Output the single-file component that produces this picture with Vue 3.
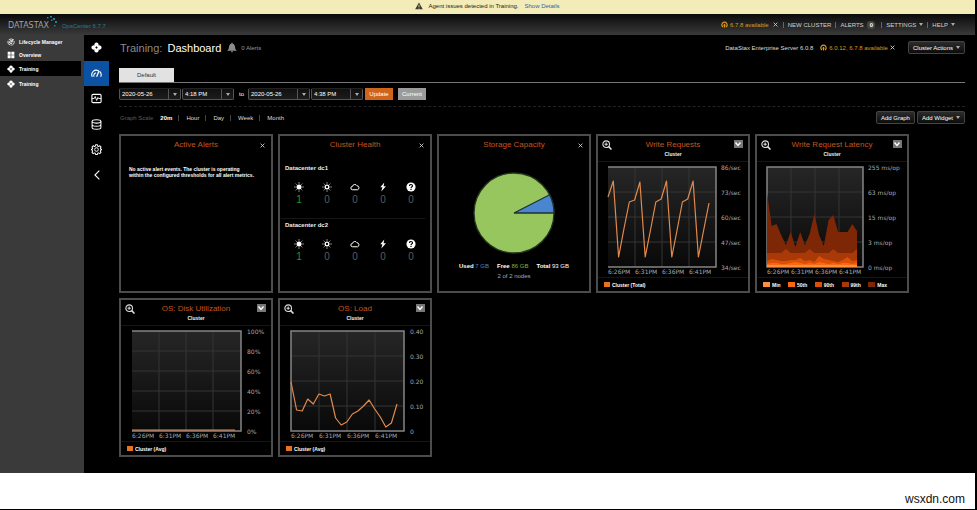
<script setup>
const sideTop = [
  { label: 'Lifecycle Manager', icon: 'lifecycle' },
  { label: 'Overview', icon: 'grid' },
]
const sideClusters = [
  { id: 1, label: 'Training', active: true },
  { id: 2, label: 'Training', active: false },
]
const railItems = [
  { name: 'Cluster', icon: 'nodes' },
  { name: 'Dashboard', icon: 'gauge', active: true },
  { name: 'Activities', icon: 'pulse' },
  { name: 'Data', icon: 'database' },
  { name: 'Services', icon: 'gear' },
  { name: 'Collapse', icon: 'back' },
]
const range = [
  { id: 'from-date', name: 'From date', value: '2020-05-26', kind: 'date' },
  { id: 'from-time', name: 'From time', value: '4:18 PM', kind: 'time' },
  { id: 'to-date', name: 'To date', value: '2020-05-26', kind: 'date', lead: 'to' },
  { id: 'to-time', name: 'To time', value: '4:38 PM', kind: 'time' },
]
const scales = ['20m', 'Hour', 'Day', 'Week', 'Month']
const datacenters = ['Datacenter dc1', 'Datacenter dc2']
const health = [
  { icon: 'sun', count: 1 },
  { icon: 'sunOpen', count: 0 },
  { icon: 'cloud', count: 0 },
  { icon: 'bolt', count: 0 },
  { icon: 'help', count: 0 },
]

const TOP = 5
const PLOT_H = 100
const times = ['6:26PM', '6:31PM', '6:36PM', '6:41PM']
const charts = [
  {
    title: 'Write Requests', left: 10, width: 108, step: 27, labelX: 123, span: 101, open: true,
    ticks: ['86/sec', '73/sec', '60/sec', '47/sec', '34/sec'],
    legend: [{ label: 'Cluster (Total)', color: '#e8731f' }],
    series: [{ color: '#e08a4c', values: [70, 86, 10, 38, 65, 67, 85, 10, 37, 65, 68, 86, 10, 37, 65, 68, 86, 10, 37, 64] }],
  },
  {
    title: 'Write Request Latency', left: 10, width: 96, step: 24, labelX: 111, span: 90, area: true,
    ticks: ['255 ms/op', '63 ms/op', '15 ms/op', '3 ms/op', '0 ms/op'],
    legend: [
      { label: 'Min', color: '#ff8f3c' },
      { label: '50th', color: '#f96a10' },
      { label: '90th', color: '#dc4f08' },
      { label: '99th', color: '#a93a08' },
      { label: 'Max', color: '#7d2706' },
    ],
    series: [
      { color: '#7d2706', values: [75, 41, 43, 32, 22, 35, 20, 35, 22, 33, 53, 32, 21, 47, 52, 35, 35, 35, 43, 36] },
      { color: '#a93a08', values: [14, 14, 14, 14, 18, 14, 14, 14, 14, 18, 14, 14, 14, 14, 18, 14, 14, 14, 14, 18] },
      { color: '#dc4f08', values: [6, 8, 7, 6, 6, 7, 7, 9, 6, 7, 5, 11, 8, 7, 6, 5, 7, 10, 6, 7] },
      { color: '#f96a10', values: [3, 4, 4, 3, 3, 4, 5, 4, 3, 4, 3, 5, 4, 3, 4, 3, 4, 4, 3, 4] },
      { color: '#ff8f3c', values: [2, 2, 2, 2, 2, 2, 2, 2, 2, 2, 2, 2, 2, 2, 2, 2, 2, 2, 2, 2] },
    ],
  },
  {
    title: 'OS: Disk Utilization', left: 11, width: 109, step: 27, labelX: 126, span: 103, open: true,
    ticks: ['100%', '80%', '60%', '40%', '20%', '0%'],
    legend: [{ label: 'Cluster (Avg)', color: '#e8731f' }],
    series: [{ color: '#e0905c', values: [1, 1, 1, 1, 1, 1, 1, 1, 1, 1, 1, 1, 1, 1, 1, 1, 1, 1, 1, 1] }],
  },
  {
    title: 'OS: Load', left: 11, width: 113, step: 28, labelX: 130, span: 106,
    ticks: ['0.40', '0.30', '0.20', '0.10', '0'],
    legend: [{ label: 'Cluster (Avg)', color: '#e8731f' }],
    series: [{ color: '#e08a4c', values: [49, 21, 20, 32, 27, 37, 35, 37, 13, 6, 9, 17, 20, 25, 31, 22, 14, 4, 8, 27] }],
  },
]

function tickY(chart, i) {
  return TOP + (PLOT_H * i) / (chart.ticks.length - 1)
}
function frame(chart) {
  return `M${chart.left} ${TOP}h${chart.width}v${PLOT_H}h${-chart.width}${chart.open ? '' : 'z'}`
}
function points(chart, values) {
  const pts = values.map((v, i) => {
    const x = chart.left + (chart.span * i) / (values.length - 1)
    return `${x.toFixed(1)},${TOP + PLOT_H - v}`
  })
  if (chart.area) {
    pts.unshift(`${chart.left},${TOP + PLOT_H}`)
    pts.push(`${chart.left + chart.span},${TOP + PLOT_H}`)
  }
  return pts.join(' ')
}

const angle = (7 / 93) * Math.PI * 2
const sliceX = (41 + 40 * Math.cos(angle)).toFixed(2)
const sliceY = (41 - 40 * Math.sin(angle)).toFixed(2)
const slicePath = `M41 41L81 41A40 40 0 0 0 ${sliceX} ${sliceY}Z`
</script>

<template>
  <svg class="defs" aria-hidden="true">
    <symbol id="nodes" viewBox="0 0 12 12">
      <path fill="currentColor" fill-rule="evenodd" d="M6 .6a2.4 2.4 0 0 1 2.2 3.2A2.4 2.4 0 1 1 8.2 8.2 2.4 2.4 0 1 1 3.8 8.2 2.4 2.4 0 1 1 3.8 3.8 2.4 2.4 0 0 1 6 .6ZM6 4.6 4.6 6 6 7.4 7.4 6Z" />
    </symbol>
    <symbol id="grid" viewBox="0 0 12 12">
      <path fill="currentColor" d="M1 1h4.500v4.500H1zM6.500 1H11v4.500H6.500zM1 6.500h4.500V11H1zM6.500 6.500H11V11H6.500z" />
    </symbol>
    <symbol id="lifecycle" viewBox="0 0 12 12">
      <g fill="none" stroke="currentColor" stroke-width="1.200" stroke-linecap="round">
        <path d="M3 2.500A4.800 4.800 0 0 1 9.500 2.600M10.700 5A4.800 4.800 0 0 1 6.800 10.700M4.600 10.600A4.800 4.800 0 0 1 1.200 5" />
        <path d="M8.300 5.200A2.500 2.500 0 1 0 7.800 7.800M9.500 2.600 6 6" />
      </g>
      <circle cx="6" cy="6" r="1" fill="currentColor" />
    </symbol>
    <symbol id="gauge" viewBox="0 0 12 12">
      <g fill="none" stroke="currentColor" stroke-width="1.200" stroke-linecap="round">
        <path d="M1.200 9.200A4.900 4.900 0 0 1 8 3M9.700 4.100A4.900 4.900 0 0 1 10.800 9.200M3.200 9A2.800 2.800 0 0 1 5 5.400" />
        <path d="M8.600 3.600 6.400 9" stroke-width="1.400" />
      </g>
    </symbol>
    <symbol id="pulse" viewBox="0 0 12 12">
      <g fill="none" stroke="currentColor">
        <rect x="1" y="1.500" width="10" height="9" rx="1.200" stroke-width="1.200" />
        <path d="M1 6h2.500L4.600 3.800 6.200 8.200 7.500 4.800 8.200 6H11" />
      </g>
    </symbol>
    <symbol id="database" viewBox="0 0 12 12">
      <g fill="none" stroke="currentColor" stroke-width="1.100">
        <ellipse cx="6" cy="2.700" rx="4.800" ry="1.800" />
        <path d="M1.200 2.700v6.500c0 1 2.100 1.900 4.800 1.900s4.800-.9 4.800-1.900V2.700M1.200 5.900c0 1 2.100 1.900 4.800 1.900s4.800-.9 4.800-1.900" />
      </g>
    </symbol>
    <symbol id="gear" viewBox="0 0 12 12">
      <g fill="none" stroke="currentColor" stroke-linejoin="round">
        <path stroke-width="1.100" d="M5 .8h2l.3 1.500 1 .4 1.300-.8L11 3.300l-.8 1.200.4 1L11.800 6l-1.200 1-.4 1 .7 1.200-1.400 1.300-1.200-.8-1 .4L7 11.400H5l-.4-1.300-1-.4-1.200.8L1.100 9.200 1.800 8l-.4-1L.3 6l1.100-.5.4-1L1.100 3.300l1.300-1.400 1.300.8 1-.4Z" />
        <circle cx="6" cy="6" r="2" />
      </g>
    </symbol>
    <symbol id="back" viewBox="0 0 12 12">
      <path fill="none" stroke="currentColor" stroke-width="1.300" d="M8.800.8 3.500 6l5.300 5.200" />
    </symbol>
    <symbol id="sun" viewBox="0 0 12 12">
      <circle cx="6" cy="6" r="3" fill="currentColor" />
      <path stroke="currentColor" stroke-width="1.100" d="M6 .5v1.300M6 10.200v1.300M.5 6h1.300M10.200 6h1.300M2.100 2.100l.9.9M9 9l.9.9M2.100 9.900 3 9M9 3l.9-.9" />
    </symbol>
    <symbol id="sunOpen" viewBox="0 0 12 12">
      <circle cx="6" cy="6" r="2.200" fill="none" stroke="currentColor" stroke-width="1.600" />
      <path stroke="currentColor" stroke-width="1.100" d="M6 .5v1.300M6 10.200v1.300M.5 6h1.300M10.200 6h1.300M2.100 2.100l.9.9M9 9l.9.9M2.100 9.900 3 9M9 3l.9-.9" />
    </symbol>
    <symbol id="cloud" viewBox="0 0 12 12">
      <path fill="none" stroke="currentColor" stroke-width="1.200" d="M3 9.300a2 2 0 0 1 0-4 2.900 2.900 0 0 1 5.400-.8A2.500 2.500 0 0 1 9.200 9.300Z" />
    </symbol>
    <symbol id="bolt" viewBox="0 0 12 12">
      <path fill="currentColor" d="M7.500.5 2.800 6.300h2.500L4 11.500l5.500-6.300H6.700Z" />
    </symbol>
    <symbol id="help" viewBox="0 0 12 12">
      <circle cx="6" cy="6" r="5.500" fill="currentColor" />
      <path fill="none" stroke="#000" stroke-width="1.400" d="M4.200 4.700c0-2.400 3.700-2.200 3.600 0C7.700 5.900 6 5.900 6 7.400M6 8.300v1.400" />
    </symbol>
    <symbol id="upgrade" viewBox="0 0 12 12">
      <path fill="none" stroke="currentColor" stroke-width="2" d="M3.200 10.300A4.600 4.600 0 1 1 8.800 10.300" />
      <path fill="currentColor" d="M6 4.500 8.600 7.500H7V11H5V7.500H3.400Z" />
    </symbol>
    <symbol id="cross" viewBox="0 0 12 12">
      <path stroke="currentColor" stroke-width="2" d="m1.500 1.500 9 9M10.500 1.500l-9 9" />
    </symbol>
    <symbol id="magnify" viewBox="0 0 12 12">
      <g fill="none" stroke="currentColor" stroke-width="1.300">
        <circle cx="5" cy="5" r="4" />
        <path d="M5 3v4M3 5h4" />
        <path d="m8 8 3.400 3.400" stroke-width="1.900" />
      </g>
    </symbol>
  </svg>

  <div class="page">
    <div class="notice" role="status">
      <svg class="warn" viewBox="0 0 12 12" aria-hidden="true">
        <path fill="#3d3a2c" d="M6 .8 11.700 11H.3Z" />
        <path stroke="#f4ecb8" stroke-width="1.200" d="M6 4.200v3.500M6 8.600v1.200" />
      </svg>
      <span>Agent issues detected in Training.</span>
      <a href="#details">Show Details</a>
    </div>

    <header class="topbar">
      <div class="brand">
        <span class="logo">DATASTAX</span>
        <svg class="sparks" viewBox="0 0 12 12" aria-hidden="true">
          <g fill="#1f8296">
            <rect x="1" y="1" width="1.500" height="1.500" /><rect x="4" y="0" width="2" height="1.500" />
            <rect x="7" y="2" width="2" height="2" /><rect x="5" y="3.500" width="1.500" height="1.500" />
            <rect x="9" y="5" width="2" height="2" /><rect x="8" y="9" width="1.500" height="1.500" />
          </g>
        </svg>
        <span class="product">OpsCenter 6.7.7</span>
      </div>
      <nav class="topnav" aria-label="Main">
        <a class="amber" href="#upgrade"><svg class="ic7"><use href="#upgrade" /></svg>6.7.8 available</a>
        <button class="plain dismiss" aria-label="Dismiss version"><svg class="ic5"><use href="#cross" /></svg></button>
        <i class="bar"></i>
        <a href="#new">NEW CLUSTER</a>
        <i class="bar"></i>
        <a href="#alerts">ALERTS <b class="badge">0</b></a>
        <i class="bar"></i>
        <button class="plain">SETTINGS<i class="caret"></i></button>
        <i class="bar"></i>
        <button class="plain">HELP<i class="caret"></i></button>
      </nav>
    </header>

    <div class="body">
      <aside class="sidebar">
        <a v-for="s in sideTop" :key="s.label" href="#side" class="side-link">
          <svg class="ic8"><use :href="'#' + s.icon" /></svg>{{ s.label }}
        </a>
        <a v-for="s in sideClusters" :key="s.id" href="#cluster" class="side-link cluster" :class="{ active: s.active }">
          <svg class="ic8"><use href="#nodes" /></svg>{{ s.label }}
        </a>
      </aside>

      <nav class="rail" aria-label="Cluster sections">
        <div class="rail-items">
          <button v-for="r in railItems" :key="r.icon" :aria-label="r.name" :class="{ active: r.active }">
            <svg :class="r.icon === 'back' ? 'ic10' : 'ic11'"><use :href="'#' + r.icon" /></svg>
          </button>
        </div>
      </nav>

      <main class="content">
        <div class="titlebar">
          <h1><span>Training:</span> Dashboard</h1>
          <svg class="bell" viewBox="0 0 12 12" aria-hidden="true">
            <path fill="#8b8b8b" d="M6 .3c.7 0 1 .5 1 1.100C9 2 9.600 3.800 9.700 6c.1 1.700.7 2.400 1.800 3.200v.6H.5v-.6C1.600 8.400 2.200 7.700 2.300 6 2.400 3.800 3 2 5 1.400 5 .8 5.300.3 6 .3ZM4.600 10.400h2.800c0 1.800-2.800 1.800-2.800 0Z" />
          </svg>
          <span class="muted">0 Alerts</span>
          <div class="title-right">
            <span>DataStax Enterprise Server 6.0.8</span>
            <a class="amber" href="#versions"><svg class="ic7"><use href="#upgrade" /></svg>6.0.12, 6.7.8 available</a>
            <button class="plain" aria-label="Dismiss update"><svg class="ic5"><use href="#cross" /></svg></button>
            <button class="btn actions">Cluster Actions<i class="caret"></i></button>
          </div>
        </div>

        <div class="tabs"><button class="tab">Default</button></div>

        <form class="range" @submit.prevent>
          <template v-for="r in range" :key="r.id">
            <span v-if="r.lead" class="lead">{{ r.lead }}</span>
            <label class="combo" :class="r.kind">
              <select :id="r.id" :aria-label="r.name"><option>{{ r.value }}</option></select>
              <span class="drop"><i class="caret"></i></span>
            </label>
          </template>
          <button class="solid update">Update</button>
          <button class="solid current" type="button">Current</button>
        </form>

        <div class="scale">
          <span class="scale-label">Graph Scale</span>
          <div class="scale-list">
            <button v-for="(s, i) in scales" :key="s" class="plain" :class="{ on: i === 0 }">{{ s }}</button>
          </div>
          <div class="scale-actions">
            <button class="btn">Add Graph</button>
            <button class="btn">Add Widget<i class="caret"></i></button>
          </div>
        </div>

        <div class="widgets">
          <section class="widget">
            <div class="head">
              <h2>Active Alerts</h2>
              <button class="plain close" aria-label="Close"><svg class="ic5"><use href="#cross" /></svg></button>
            </div>
            <p class="message">No active alert events. The cluster is operating<br />within the configured thresholds for all alert metrics.</p>
          </section>

          <section class="widget">
            <div class="head">
              <h2>Cluster Health</h2>
              <button class="plain close" aria-label="Close"><svg class="ic5"><use href="#cross" /></svg></button>
            </div>
            <div v-for="dc in datacenters" :key="dc" class="dc">
              <h3>{{ dc }}</h3>
              <div class="states">
                <div v-for="h in health" :key="h.icon" class="state" :class="{ ok: h.count > 0 }">
                  <svg class="ic10"><use :href="'#' + h.icon" /></svg>
                  <span>{{ h.count }}</span>
                </div>
              </div>
            </div>
          </section>

          <section class="widget storage">
            <div class="head">
              <h2>Storage Capacity</h2>
              <button class="plain close" aria-label="Close"><svg class="ic5"><use href="#cross" /></svg></button>
            </div>
            <svg class="pie" viewBox="0 0 82 82" role="img" aria-label="Storage use">
              <circle cx="41" cy="41" r="40" fill="#97c65f" stroke="#26361f" stroke-width="1.300" />
              <path :d="slicePath" fill="#4a86cf" stroke="#1f2f33" stroke-width="1.300" />
            </svg>
            <div class="usage">
              <span><b>Used</b> <em class="used">7 GB</em></span>
              <span><b>Free</b> <em class="free">86 GB</em></span>
              <span><b>Total</b> <em>93 GB</em></span>
            </div>
            <div class="nodes-note">2 of 2 nodes</div>
          </section>

          <section v-for="(c, ci) in charts" :key="c.title" class="widget">
            <div class="head chart-head">
              <button class="plain zoom" aria-label="Zoom"><svg class="ic10"><use href="#magnify" /></svg></button>
              <div class="names">
                <h2>{{ c.title }}</h2>
                <div class="sub">Cluster</div>
              </div>
              <button class="menu" aria-label="Graph menu">
                <svg viewBox="0 0 8 8"><path d="M1.500 2.500 4 5.500 6.500 2.500" fill="none" stroke="#fff" stroke-width="1.400" /></svg>
              </button>
            </div>
            <svg class="chart" viewBox="0 0 150 115" role="img" :aria-label="c.title">
              <defs>
                <linearGradient :id="'plot' + ci" x1="0" y1="0" x2="0" y2="1">
                  <stop offset="0" stop-color="#262626" /><stop offset="1" stop-color="#090909" />
                </linearGradient>
              </defs>
              <rect :x="c.left" :y="TOP" :width="c.width" :height="PLOT_H" :fill="`url(#plot${ci})`" />
              <g stroke="#353535" stroke-width="1">
                <line v-for="n in c.ticks.length - 2" :key="'h' + n" :x1="c.left" :x2="c.left + c.width" :y1="tickY(c, n)" :y2="tickY(c, n)" />
                <line v-for="n in 3" :key="'v' + n" :y1="TOP" :y2="TOP + PLOT_H" :x1="c.left + c.step * n" :x2="c.left + c.step * n" />
              </g>
              <path :d="frame(c)" fill="none" stroke="#858585" stroke-width="1.500" />
              <template v-for="(s, si) in c.series" :key="si">
                <polygon v-if="c.area" :points="points(c, s.values)" :fill="s.color" />
                <polyline v-else :points="points(c, s.values)" fill="none" :stroke="s.color" stroke-width="1.200" stroke-linejoin="round" />
              </template>
              <g class="axis">
                <text v-for="(t, i) in c.ticks" :key="t" :x="c.labelX" :y="tickY(c, i) + 3">{{ t }}</text>
                <text v-for="(t, i) in times" :key="t" :x="c.left + c.step * i" y="112">{{ t }}</text>
              </g>
            </svg>
            <div class="legend" :class="{ multi: c.legend.length > 1 }">
              <span v-for="l in c.legend" :key="l.label"><i :style="{ background: l.color }"></i>{{ l.label }}</span>
            </div>
          </section>
        </div>
      </main>
    </div>

    <footer class="foot">wsxdn.com</footer>
  </div>
</template>

<style>
body {
  background: #000;
}
</style>

<style scoped>
* {
  box-sizing: border-box;
}
.defs {
  position: absolute;
  width: 0;
  height: 0;
}
.page {
  display: flex;
  flex-direction: column;
  min-height: 100vh;
  padding: 0 2px 1px 0;
  background: #000;
  color: #ddd;
  font-family: "Liberation Sans", Arial, sans-serif;
  font-size: 6px;
  line-height: 8px;
}
h1, h2, h3, p {
  margin: 0;
  font-weight: normal;
}
a {
  color: inherit;
  text-decoration: none;
}
button, select {
  font: inherit;
  color: inherit;
  margin: 0;
  padding: 0;
  border: 0;
  background: none;
  white-space: nowrap;
}
.plain {
  display: flex;
  align-items: center;
}
svg {
  display: block;
  flex: none;
}
.ic5 { width: 5px; height: 5px; }
.ic7 { width: 7px; height: 7px; }
.ic8 { width: 8px; height: 8px; }
.ic10 { width: 10px; height: 10px; }
.ic11 { width: 11px; height: 11px; }
.caret {
  display: inline-block;
  border: 2px solid transparent;
  border-top: 3px solid #aaa;
  border-bottom: 0;
}

.notice {
  display: flex;
  align-items: center;
  justify-content: center;
  height: 14px;
  padding-bottom: 2px;
  background: #f4ecb8;
  color: #222;
}
.notice a {
  margin-left: 6px;
  color: #2c5fae;
}
.warn {
  width: 8px;
  height: 8px;
  margin-right: 5px;
}

.topbar {
  display: flex;
  align-items: center;
  justify-content: space-between;
  height: 21px;
  padding: 0 20px 0 8px;
  background: linear-gradient(#0a0a0a, #3a3a3a);
}
.brand {
  display: flex;
  align-items: center;
  padding-top: 3px;
}
.logo {
  font-family: "DejaVu Sans", sans-serif;
  font-size: 8px;
  color: #a0a0a0;
}
.sparks {
  width: 12px;
  height: 12px;
  margin: 0 4px 8px -3px;
}
.product {
  color: #1f7f93;
}
.topnav {
  display: flex;
  align-items: center;
  color: #d0d0d0;
}
.topnav .caret {
  margin-left: 3px;
}
.amber {
  display: flex;
  align-items: center;
  gap: 2px;
  color: #dd9a1c;
}
.dismiss {
  margin: 0 1px 0 4px;
}
.bar {
  width: 1px;
  height: 6px;
  margin: 0 4px;
  background: #666;
}
.badge {
  display: inline-block;
  min-width: 8px;
  margin: 0 2px;
  border-radius: 3px;
  background: #444;
  color: #fff;
  text-align: center;
}

.body {
  display: flex;
  flex: 1;
}
.sidebar {
  width: 84px;
  padding-right: 3px;
  background: #3a3a3a;
}
.side-link {
  display: flex;
  align-items: center;
  gap: 4px;
  height: 13px;
  padding-left: 7px;
  color: #fff;
  font-size: 5px;
  font-weight: bold;
}
.side-link.cluster {
  height: 15px;
}
.side-link.active {
  background: #000;
}
.rail-items {
  display: flex;
  flex-direction: column;
  justify-content: space-between;
  width: 25px;
  height: 153px;
}
.rail button {
  display: flex;
  align-items: center;
  justify-content: center;
  height: 25px;
  color: #fff;
}
.rail button.active {
  background: #0b52a5;
}

.content {
  flex: 1;
  min-width: 0;
  padding: 0 10px 16px;
}
.titlebar {
  display: flex;
  align-items: center;
  height: 25px;
  padding-left: 1px;
}
h1 {
  color: #fff;
  font-size: 11px;
  line-height: 14px;
}
h1 span {
  margin-right: 2px;
  color: #8a8a8a;
}
.bell {
  width: 10px;
  height: 11px;
  margin: 0 4px 0 6px;
}
.muted {
  color: #999;
}
.title-right {
  display: flex;
  align-items: center;
  margin-left: auto;
}
.title-right .amber {
  margin: 0 2px 0 7px;
}
.btn {
  display: flex;
  align-items: center;
  gap: 3px;
  height: 13px;
  padding: 0 4px;
  border: 1px solid #444;
  border-radius: 2px;
  background: linear-gradient(#2c2c2c, #0c0c0c);
  color: #fff;
}
.actions {
  margin-left: 13px;
}

.tabs {
  display: flex;
  margin-top: 8px;
  border-bottom: 1px solid #777;
}
.tab {
  width: 55px;
  height: 14px;
  background: #e2e2e2;
  color: #333;
}

.range {
  display: flex;
  align-items: center;
  gap: 1px;
  height: 24px;
  padding-bottom: 1px;
  border-bottom: 1px dashed #222;
}
.combo {
  display: flex;
  height: 12px;
  border: 1px solid #555;
  border-top-color: #222;
  border-radius: 2px;
  background: linear-gradient(#111, #1c1c1c);
  color: #fff;
}
.combo.date { width: 62px; }
.combo.time { width: 52px; }
.combo select {
  flex: 1;
  min-width: 0;
  appearance: none;
  padding-left: 2px;
}
.drop {
  display: flex;
  align-items: center;
  justify-content: center;
  width: 12px;
  border-left: 1px solid #555;
}
.lead {
  padding: 0 3px 0 4px;
  color: #fff;
}
.solid {
  width: 28px;
  height: 12px;
  color: #fff;
}
.update {
  margin-left: 1px;
  background: #d0641c;
}
.current {
  margin-left: 4px;
  background: #9b9b9b;
}

.scale {
  display: flex;
  align-items: center;
  height: 21px;
  padding-left: 1px;
}
.scale-label {
  color: #5c5c5c;
}
.scale-list {
  display: flex;
  margin-left: 1px;
}
.scale-list button {
  padding: 0 6px 0 7px;
  line-height: 6px;
}
.scale-list button:first-child {
  padding-left: 6px;
}
.scale-list button + button {
  border-left: 1px solid #444;
}
.scale-list .on {
  color: #fff;
  font-weight: bold;
}
.scale-actions {
  display: flex;
  gap: 2px;
  margin-left: auto;
}

.widgets {
  display: grid;
  grid-template-columns: repeat(auto-fill, 154px);
  gap: 5px;
  margin-top: 6px;
}
.widget {
  display: flex;
  flex-direction: column;
  height: 159px;
  border: 2px solid #4c4c4c;
  background: #000;
}
.head {
  position: relative;
  flex: none;
  height: 26px;
  padding-top: 4px;
  text-align: center;
}
h2 {
  color: #c0561f;
  font-size: 8px;
  line-height: 10px;
}
.close {
  position: absolute;
  top: 7px;
  right: 6px;
  color: #ddd;
}
.message {
  padding: 4px 8px;
  color: #fff;
  font-size: 5px;
  font-weight: bold;
  line-height: 6px;
  white-space: nowrap;
}
.dc {
  height: 56px;
  margin: 0 5px 0 1px;
  padding: 2px 0 0 4px;
}
.dc + .dc {
  border-top: 1px solid #151515;
}
h3 {
  color: #eee;
  font-size: 6px;
  font-weight: bold;
  line-height: 8px;
}
.states {
  display: grid;
  grid-template-columns: repeat(5, 28px);
  padding-top: 10px;
}
.state {
  display: flex;
  flex-direction: column;
  align-items: center;
  gap: 2px;
  color: #fff;
}
.state span {
  color: #5c5c5c;
  font-size: 10px;
  line-height: 12px;
}
.state.ok span {
  color: #1f9a1f;
}

.storage {
  align-items: center;
}
.storage .head {
  width: 100%;
}
.pie {
  width: 82px;
  height: 82px;
  margin-top: 10px;
}
.usage {
  display: flex;
  gap: 8px;
  margin-top: 8px;
  color: #fff;
}
.usage em {
  font-style: normal;
}
.usage .used { color: #4a86cf; }
.usage .free { color: #7db53f; }
.nodes-note {
  margin-top: 2px;
  color: #aaa;
}

.chart-head {
  display: flex;
  justify-content: space-between;
  align-items: flex-start;
  padding: 4px 5px 0 4px;
  border-bottom: 1px solid #151515;
}
.names {
  flex: 1;
}
.sub {
  color: #eee;
  font-size: 5px;
  font-weight: bold;
}
.zoom {
  width: 10px;
}
.menu {
  width: 9px;
  height: 8px;
  background: #777;
}
.menu svg {
  width: 8px;
  height: 8px;
}
.chart {
  width: 100%;
  height: 115px;
}
.axis text {
  fill: #a8a8a8;
  font-family: "DejaVu Sans", sans-serif;
  font-size: 6px;
}
.legend {
  display: flex;
  align-items: center;
  height: 14px;
  padding-left: 6px;
  border-top: 1px solid #151515;
  color: #fff;
  font-size: 5px;
  font-weight: bold;
}
.legend.multi {
  justify-content: space-between;
  padding-right: 20px;
}
.legend span {
  display: flex;
  align-items: center;
  gap: 2px;
}
.legend i {
  width: 6px;
  height: 5px;
}
.legend.multi i {
  width: 7px;
}

.foot {
  display: flex;
  align-items: center;
  justify-content: flex-end;
  height: 36px;
  padding: 16px 10px 0 0;
  background: #fff;
  color: #111;
  font-size: 12px;
}
</style>
